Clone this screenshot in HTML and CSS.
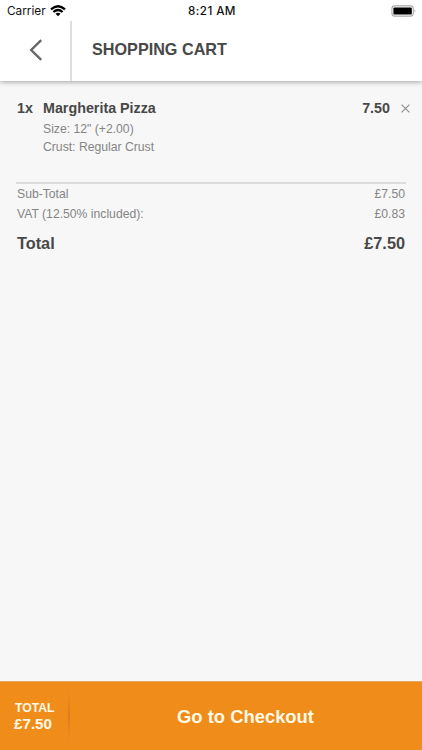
FILE: index.html
```html
<!DOCTYPE html>
<html lang="en">
<head>
<meta charset="utf-8">
<title>Shopping Cart</title>
<link rel="stylesheet" href="styles.css">
</head>
<body>
<div class="app">
  <div class="status">
    <div class="carrier"><span>Carrier</span>
      <svg class="wifi" width="16" height="12" viewBox="0 0 16 12" fill="none" stroke="#000" stroke-width="2.3"><path d="M1 4.4Q8-2 15 4.4M3.4 7Q8 3 12.6 7"/><path d="M5.5 8.7Q8 6.7 10.5 8.7L8 11.3Z" fill="#000" stroke="none"/></svg>
    </div>
    <div class="time">8:21 AM</div>
    <svg class="battery" width="26" height="12" viewBox="0 0 26 12"><rect x=".9" y=".9" width="21.4" height="10.2" rx="2.8" fill="#fff" stroke="#aaa" stroke-width="1.1"/><rect x="2.4" y="2.4" width="18.4" height="7.2" rx="1.2"/><path d="M23.7 4.2Q25.1 6 23.7 7.8Z" fill="#888"/></svg>
  </div>
  <header class="header">
    <button class="back" aria-label="Back"><svg width="14" height="22" viewBox="0 0 14 22" fill="none" stroke="#666" stroke-width="2.4"><path d="M12.2 1.2L2.2 11l10 9.8"/></svg></button>
    <h1 class="title">SHOPPING CART</h1>
  </header>
  <main class="cart">
    <section class="item">
      <span class="qty">1x</span>
      <div class="details">
        <div class="name">Margherita Pizza</div>
        <div class="option">Size: 12" (+2.00)</div>
        <div class="option">Crust: Regular Crust</div>
      </div>
      <span class="price">7.50</span>
      <svg class="remove" width="9" height="9" viewBox="0 0 9 9" stroke="#8c8c8c" stroke-width="1.1"><path d="M.6.6l7.8 7.8M8.4.6L.6 8.4"/></svg>
    </section>
    <section class="totals">
      <div class="line"><span>Sub-Total</span><span>£7.50</span></div>
      <div class="line"><span>VAT (12.50% included):</span><span>£0.83</span></div>
      <div class="line grand"><span>Total</span><span>£7.50</span></div>
    </section>
  </main>
  <footer class="footer">
    <div class="sum"><div class="sum-label">TOTAL</div><div class="sum-value">£7.50</div></div>
    <div class="divider"></div>
    <div class="checkout">Go to Checkout</div>
  </footer>
</div>
</body>
</html>
```
FILE: styles.css
```css
* { box-sizing: border-box; }
body { margin: 0; font-family: "Liberation Sans", Arial, sans-serif; color: #484848; }
.app { width: 422px; height: 750px; display: flex; flex-direction: column; background: #f7f7f7; overflow: hidden; }
.status { position: relative; z-index: 1; height: 21px; flex: none; display: grid; grid-template-columns: 1fr auto 1fr; align-items: center; padding: 1px 5px 0 7px; background: #fff; color: #111; font-family: Inter, sans-serif; font-size: 11.8px; line-height: 20px; }
.carrier { display: flex; align-items: center; gap: 4px; }
.time { font-weight: 500; font-size: 11.7px; letter-spacing: .4px; }
.battery { justify-self: end; }
.header { height: 60px; flex: none; display: flex; background: #fff; box-shadow: 0 1px 5px rgba(0, 0, 0, .35); }
.back { width: 72px; padding: 0 0 0 2px; border: 0; border-right: 2px solid #dedede; background: none; display: flex; align-items: center; justify-content: center; }
.back svg { margin-top: -2px; }
.title { margin: 0 0 0 20px; font-size: 16.2px; line-height: 57px; }
.cart { flex: 1; padding: 18px 16px 0; }
.item { display: flex; align-items: flex-start; height: 83px; }
.qty, .name, .price { font-size: 14.3px; font-weight: bold; line-height: 18px; }
.qty { width: 27px; padding-left: 1px; }
.details { flex: 1; }
.option { font-size: 12.2px; line-height: 18px; color: #858585; }
.name + .option { margin-top: 3px; }
.remove { margin: 5px -4px 0 11px; }
.totals { border-top: 2px solid #dcdcdc; padding: 0 1px; }
.line { display: flex; justify-content: space-between; font-size: 12.2px; line-height: 20px; color: #858585; }
.grand { margin-top: 8px; font-size: 16.3px; line-height: 22px; font-weight: bold; color: #484848; }
.footer { height: 69px; flex: none; display: flex; border-top: 1px solid #e4a95f; background: #f08c1a; color: #fff9e5; font-weight: bold; }
.sum { width: 68px; padding: 19px 0 0 14px; }
.sum-label { padding-left: 1px; font-size: 12.2px; line-height: 15px; }
.sum-value { font-size: 15.2px; line-height: 15px; }
.divider { width: 2px; height: 50px; margin-top: 9px; background: linear-gradient(rgba(190, 105, 35, 0), rgba(190, 105, 35, .45), rgba(190, 105, 35, 0)); }
.checkout { flex: 1; padding-right: 1px; text-align: center; font-size: 18.4px; line-height: 69px; }
```
